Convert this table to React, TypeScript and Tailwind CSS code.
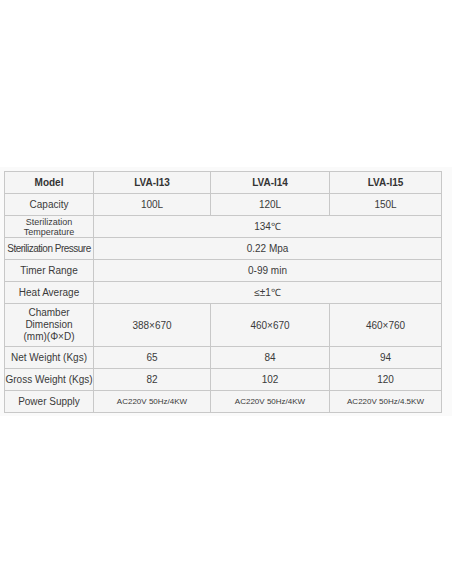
const cols = ["w-[89px]", "w-[117px]", "w-[119px]", "w-[112px]"]

type Row = { label: React.ReactNode; cells: string[]; tall?: boolean; small?: boolean; head?: boolean }

const rows: Row[] = [
  { label: "Model", cells: ["LVA-I13", "LVA-I14", "LVA-I15"], head: true },
  { label: "Capacity", cells: ["100L", "120L", "150L"] },
  {
    label: (
      <span className="block text-[9px] leading-[10px]">
        Sterilization
        <br />
        Temperature
      </span>
    ),
    cells: ["134℃"],
  },
  { label: <span className="tracking-[-0.5px]">Sterilization Pressure</span>, cells: ["0.22 Mpa"] },
  { label: "Timer Range", cells: ["0-99 min"] },
  { label: "Heat Average", cells: ["≤±1℃"] },
  {
    label: (
      <span className="block leading-[12px]">
        Chamber
        <br />
        Dimension
        <br />
        (mm)(Φ×D)
      </span>
    ),
    cells: ["388×670", "460×670", "460×760"],
    tall: true,
  },
  { label: "Net Weight (Kgs)", cells: ["65", "84", "94"] },
  { label: "Gross Weight (Kgs)", cells: ["82", "102", "120"] },
  { label: "Power Supply", cells: ["AC220V 50Hz/4KW", "AC220V 50Hz/4KW", "AC220V 50Hz/4.5KW"], small: true },
]

export default function App() {
  return (
    <div
      className="h-[584px] w-[452px] bg-white text-[#3a3a3a]"
      style={{ fontFamily: '"Liberation Sans", Arial, sans-serif' }}
    >
      <div className="h-[167px]" />
      <div className="h-[249px] bg-[#fafafa] pl-[4px] pt-[4px]">
        <table className="border-collapse bg-[#f5f5f5] text-center text-[10px]">
          <colgroup>
            {cols.map((c, i) => (
              <col key={i} className={c} />
            ))}
          </colgroup>
          <tbody>
            {rows.map((r, i) => (
              <tr key={i} className={r.tall ? "h-[43px]" : "h-[22px]"}>
                <td className={`border border-[#c8c8c8] p-0 ${r.head ? "font-bold text-[#333]" : ""}`}>{r.label}</td>
                {r.cells.length === 1 ? (
                  <td colSpan={3} className="border border-[#c8c8c8] p-0">
                    {r.cells[0]}
                  </td>
                ) : (
                  r.cells.map((c, j) => (
                    <td
                      key={j}
                      className={`border border-[#c8c8c8] p-0 ${r.head ? "font-bold text-[#333]" : ""} ${r.small ? "text-[8px]" : ""}`}
                    >
                      {c}
                    </td>
                  ))
                )}
              </tr>
            ))}
          </tbody>
        </table>
      </div>
    </div>
  )
}
